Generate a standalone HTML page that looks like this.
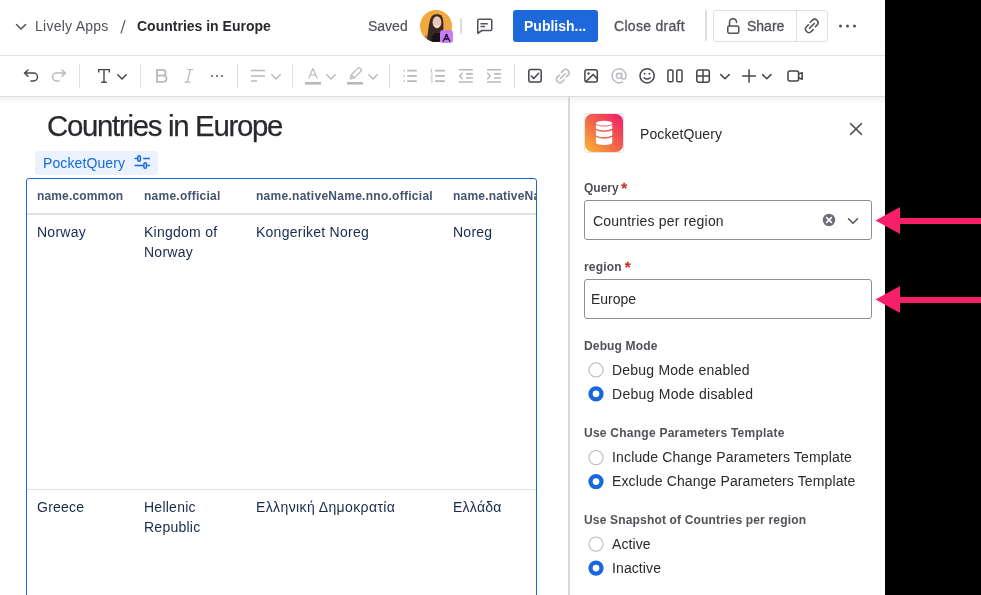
<!DOCTYPE html>
<html><head><meta charset="utf-8">
<style>
*{box-sizing:border-box;margin:0;padding:0}
html,body{width:981px;height:595px;overflow:hidden;background:#000}
body{position:relative;font-family:"Liberation Sans",sans-serif;color:#292A2E}
.abs{position:absolute;white-space:nowrap}
#app{will-change:transform;position:absolute;left:0;top:0;width:885px;height:595px;background:#fff;overflow:hidden}
.t14{font-size:14px;line-height:16px}
.t12{font-size:12px;line-height:14px}
.sub{color:#505258}
svg{position:absolute;overflow:visible}
.sep{position:absolute;width:2px;background:#DDDEE1;border-radius:1px}
.tsep{position:absolute;width:1px;background:#DDDEE1;top:64px;height:24px}
.radio{position:absolute;width:16px;height:16px;border-radius:50%;border:1px solid #B7B9BE;background:#fff}
.radio.on{border:4.5px solid #1868DB;background:#fff}
.lbl{font-weight:700;color:#505258}
.req{color:#C9372C;-webkit-text-stroke:0.3px #C9372C;letter-spacing:0;font-size:15px;line-height:14px;vertical-align:top;margin-left:-0.7px}
</style></head><body>
<div id="app">
  <!-- ============ HEADER ============ -->
  <svg style="left:0;top:0" width="40" height="56"><path d="M16.5 24.5 L21 29 L25.5 24.5" fill="none" stroke="#505258" stroke-width="1.5" stroke-linecap="round" stroke-linejoin="round"/></svg>
  <div class="abs t14 sub" style="left:35px;top:18px;letter-spacing:0.25px">Lively Apps</div>
  <svg style="left:0;top:0" width="140" height="40"><path d="M124.9 20.6 L121.1 32.9" stroke="#505258" stroke-width="1.2" stroke-linecap="round"/></svg>
  <div class="abs t14" style="left:137px;top:18px;font-weight:700;color:#292A2E">Countries in Europe</div>

  <div class="abs t14 sub" style="left:368px;top:18px;-webkit-text-stroke:0.2px #505258">Saved</div>
  <!-- avatar -->
  <svg style="left:420px;top:10px" width="32" height="32" viewBox="0 0 32 32">
    <defs><clipPath id="avc"><circle cx="16" cy="16" r="16"/></clipPath></defs>
    <g clip-path="url(#avc)">
      <rect width="32" height="32" fill="#F0A93C"/>
      <path d="M3 32 Q4 26 8 24.5 L12 26 L11 32 Z" fill="#8A7B73"/>
      <path d="M7 32 C8 22 9 9 12 6 C14 3.8 19.5 3.6 21.5 5.8 C23.5 8.5 23.8 14 23.2 22 L22 32 Z" fill="#3B2722"/>
      <ellipse cx="17" cy="12.3" rx="4.4" ry="6.1" fill="#EBC6B6"/>
      <path d="M14.9 15.5 Q17 17.3 19.1 15.5" fill="none" stroke="#fff" stroke-width="0.9"/>
      <path d="M11 32 Q12 24.5 15 23 L21 23 Q24 25 25 32 Z" fill="#171314"/>
    </g>
  </svg>
  <div class="abs" style="left:440px;top:30px;width:13px;height:13px;background:#C97CF4;border-radius:3px"></div>
  <svg style="left:440px;top:30px" width="13" height="13"><path d="M3 11.5 L6.5 5 L10 11.5 M4.5 9 L8.5 9" fill="none" stroke="#1B1B2A" stroke-width="1.4" stroke-linejoin="round"/><circle cx="6.5" cy="5" r="1.2" fill="#1B1B2A"/></svg>
  <div class="sep" style="left:460px;top:18px;height:16px"></div>
  <!-- comment icon -->
  <svg style="left:475px;top:17px" width="20" height="20"><path d="M2.75 3.5 Q2.75 2.25 4 2.25 L15.5 2.25 Q16.75 2.25 16.75 3.5 L16.75 12.25 Q16.75 13.5 15.5 13.5 L7 13.5 L2.75 16.25 Z" fill="none" stroke="#505258" stroke-width="1.5" stroke-linejoin="round"/><path d="M5.5 6.75 H12.75 M5.5 9.5 H10" stroke="#505258" stroke-width="1.5"/></svg>
  <div class="abs" style="left:513px;top:10px;width:85px;height:32px;background:#1D68DB;border-radius:3px"></div>
  <div class="abs t14" style="left:524px;top:18px;font-weight:700;color:#fff">Publish...</div>
  <div class="abs t14 sub" style="left:614px;top:18px;letter-spacing:0.3px;-webkit-text-stroke:0.3px #505258">Close draft</div>
  <div class="sep" style="left:705px;top:10px;height:31px"></div>
  <div class="abs" style="left:713px;top:10px;width:115px;height:32px;border:1px solid #DDDEE1;border-radius:3px"></div>
  <div class="abs" style="left:796px;top:10px;width:1px;height:32px;background:#DDDEE1"></div>
  <svg style="left:726px;top:17px" width="16" height="18"><path d="M3.5 8.5 V5.5 Q3.5 1.75 7 1.75 Q10.5 1.75 10.5 5.5" fill="none" stroke="#505258" stroke-width="1.5" stroke-linecap="round"/><rect x="1.75" y="9" width="11" height="7.25" rx="1.5" fill="none" stroke="#505258" stroke-width="1.5"/></svg>
  <div class="abs t14 sub" style="left:747px;top:18px;-webkit-text-stroke:0.3px #505258">Share</div>
  <svg style="left:0;top:0" width="885" height="56"><path d="M810.3 22.2 L812.2 20.3 Q814.6 17.9 817 20.3 Q819.4 22.7 817 25.1 L815.3 26.8 M808.4 24.8 L806.5 26.7 Q804.1 29.1 806.5 31.5 Q808.9 33.9 811.3 31.5 L813.2 29.6 M809.5 28.3 L814.3 23.5" fill="none" stroke="#505258" stroke-width="1.6" stroke-linecap="round"/></svg>
  <svg style="left:838px;top:24px" width="20" height="4"><circle cx="2.5" cy="2" r="1.5" fill="#505258"/><circle cx="9.5" cy="2" r="1.5" fill="#505258"/><circle cx="16.5" cy="2" r="1.5" fill="#505258"/></svg>

  <div class="abs" style="left:0;top:55px;width:885px;height:1px;background:#E4E5E7"></div>

  <!-- ============ TOOLBAR ============ -->
  <svg style="left:0;top:0" width="885" height="96">
  <g fill="none" stroke-width="1.5" stroke-linecap="round" stroke-linejoin="round">
    <!-- undo / redo -->
    <path d="M28 70 L24.5 73 L28 76.3 M24.5 73 H33.5 A4 4 0 0 1 33.5 81 H31" stroke="#44464C"/>
    <path d="M62 70 L65.5 73 L62 76.3 M65.5 73 H56.5 A4 4 0 0 0 56.5 81 H59" stroke="#B7B9BE"/>
    <!-- chevrons -->
    <path d="M117.8 74.8 L122 79 L126.2 74.8" stroke="#44464C"/>
    <path d="M271.8 74.8 L276 79 L280.2 74.8" stroke="#B7B9BE"/>
    <path d="M326.8 74.8 L331 79 L335.2 74.8" stroke="#B7B9BE"/>
    <path d="M368.8 74.8 L373 79 L377.2 74.8" stroke="#B7B9BE"/>
    <path d="M720.8 74.6 L725 78.8 L729.2 74.6" stroke="#44464C"/>
    <path d="M762.6 74.6 L766.8 78.8 L771 74.6" stroke="#44464C"/>
  </g>
  <!-- separators -->
  <g fill="#DDDEE1">
    <rect x="79" y="64" width="1" height="24"/>
    <rect x="140" y="64" width="1" height="24"/>
    <rect x="237" y="64" width="1" height="24"/>
    <rect x="292" y="64" width="1" height="24"/>
    <rect x="389" y="64" width="1" height="24"/>
    <rect x="514" y="64" width="1" height="24"/>
  </g>
  <!-- T -->
  <g fill="none" stroke="#44464C" stroke-width="1.4">
    <path d="M98.7 72.6 V69.6 H109.3 V72.6"/>
    <path d="M104 69.6 V82.2 M101.2 82.2 H106.8"/>
  </g>
  <!-- B -->
  <path d="M157 69.9 H162.2 Q165.7 69.9 165.7 72.9 Q165.7 75.6 162.2 75.6 H157 Z M157 75.6 H162.9 Q166.6 75.6 166.6 78.6 Q166.6 81.9 162.9 81.9 H157 Z" fill="none" stroke="#B7B9BE" stroke-width="1.8" stroke-linejoin="round"/>
  <!-- I -->
  <path d="M187.3 69.5 H193.3 M184.5 82.2 H190.5 M190.6 69.5 L187.2 82.2" fill="none" stroke="#B7B9BE" stroke-width="1.2"/>
  <!-- dots -->
  <g fill="#44464C"><circle cx="212" cy="76" r="0.9"/><circle cx="217" cy="76" r="0.9"/><circle cx="222" cy="76" r="0.9"/></g>
  <!-- align -->
  <path d="M251 70.6 H265 M251 75.9 H265 M251 81 H257" stroke="#B7B9BE" stroke-width="1.5" fill="none"/>
  <!-- A -->
  <path d="M308.6 78.6 L312.9 68.6 L317.3 78.6 M310.2 75 H315.6" fill="none" stroke="#B7B9BE" stroke-width="1.2" stroke-linejoin="round"/>
  <rect x="305" y="82" width="16" height="2.6" fill="#B7B9BE"/>
  <!-- highlighter -->
  <path d="M358.3 67.9 Q358.9 67.3 359.5 67.9 L361.3 69.7 Q361.9 70.3 361.3 70.9 L354.4 77.9 L351.3 74.8 Z M351.3 74.8 L350.4 78.8 L354.4 77.9" fill="none" stroke="#B7B9BE" stroke-width="1.3" stroke-linejoin="round"/>
  <rect x="347" y="82" width="16" height="2.6" fill="#B7B9BE"/>
  <!-- bullet list -->
  <g fill="#B7B9BE"><circle cx="404.2" cy="70.6" r="0.9"/><circle cx="404.2" cy="75.9" r="0.9"/><circle cx="404.2" cy="81.1" r="0.9"/></g>
  <path d="M407.2 70.6 H416.8 M407.2 75.9 H416.8 M407.2 81.1 H416.8" stroke="#B7B9BE" stroke-width="1.6"/>
  <!-- numbered list -->
  <path d="M435.1 70.6 H444.9 M435.1 75.9 H444.9 M435.1 81.1 H444.9" stroke="#B7B9BE" stroke-width="1.6"/>
  <path d="M431.5 69 V72 M430.8 69.6 L431.5 69 M430.6 72.2 H432.6 M430.6 74.6 Q431.6 73.6 432.4 74.4 Q432.8 75.2 430.6 77.3 H432.6 M430.6 79.2 H432.5 L431.4 80.6 Q432.8 80.8 432.5 82 Q431.9 82.9 430.6 82.4" fill="none" stroke="#B7B9BE" stroke-width="0.8"/>
  <!-- outdent / indent -->
  <path d="M459 69.7 H472.8 M466.1 73.9 H472.8 M466.1 78 H472.8 M459 82 H472.8" stroke="#B7B9BE" stroke-width="1.6"/>
  <path d="M462.2 73.3 L459.6 76 L462.2 78.7" fill="none" stroke="#B7B9BE" stroke-width="1.5" stroke-linecap="round" stroke-linejoin="round"/>
  <path d="M487 69.7 H500.9 M494 73.9 H500.9 M494 78 H500.9 M487 82 H500.9" stroke="#B7B9BE" stroke-width="1.6"/>
  <path d="M487.6 73.3 L490.3 76 L487.6 78.7" fill="none" stroke="#B7B9BE" stroke-width="1.5" stroke-linecap="round" stroke-linejoin="round"/>
  <!-- checkbox -->
  <rect x="528.8" y="69.6" width="12.4" height="12.4" rx="2" fill="none" stroke="#44464C" stroke-width="1.5"/>
  <path d="M531.3 76 L533.8 78.6 L538.6 73.3" fill="none" stroke="#44464C" stroke-width="1.5" stroke-linecap="round" stroke-linejoin="round"/>
  <!-- link gray -->
  <path transform="translate(-249 50.2)" d="M810.3 22.2 L812.2 20.3 Q814.6 17.9 817 20.3 Q819.4 22.7 817 25.1 L815.3 26.8 M808.4 24.8 L806.5 26.7 Q804.1 29.1 806.5 31.5 Q808.9 33.9 811.3 31.5 L813.2 29.6 M809.5 28.3 L814.3 23.5" fill="none" stroke="#B7B9BE" stroke-width="1.5" stroke-linecap="round"/>
  <!-- image -->
  <rect x="584.9" y="69.7" width="12.4" height="12.4" rx="2" fill="none" stroke="#44464C" stroke-width="1.5"/>
  <circle cx="588.5" cy="73.5" r="1.2" fill="#44464C"/>
  <path d="M585.5 82 L593.3 74.4 L597.2 79" fill="none" stroke="#44464C" stroke-width="1.5" stroke-linejoin="round"/>
  <!-- @ -->
  <circle cx="619" cy="75.8" r="2.6" fill="none" stroke="#B7B9BE" stroke-width="1.4"/>
  <path d="M621.6 73.2 V77 Q621.6 79 623.5 79 Q626 79 626 75.8 A7 7 0 1 0 622.5 81.8" fill="none" stroke="#B7B9BE" stroke-width="1.4" stroke-linecap="round"/>
  <!-- smiley -->
  <circle cx="647.1" cy="75.8" r="7.1" fill="none" stroke="#44464C" stroke-width="1.5"/>
  <circle cx="644.7" cy="73.8" r="0.95" fill="#44464C"/><circle cx="649.5" cy="73.8" r="0.95" fill="#44464C"/>
  <path d="M644 77.7 Q647.1 80.3 650.2 77.7" fill="none" stroke="#44464C" stroke-width="1.5" stroke-linecap="round"/>
  <!-- columns -->
  <rect x="667.9" y="69.9" width="5" height="11.9" rx="1.3" fill="none" stroke="#44464C" stroke-width="1.5"/>
  <rect x="676.8" y="69.9" width="5.2" height="11.9" rx="1.3" fill="none" stroke="#44464C" stroke-width="1.5"/>
  <!-- table -->
  <rect x="696.8" y="69.9" width="12.5" height="12.3" rx="2" fill="none" stroke="#44464C" stroke-width="1.5"/>
  <path d="M703.05 69.9 V82.2 M696.8 76.05 H709.3" stroke="#44464C" stroke-width="1.5"/>
  <!-- plus -->
  <path d="M749.05 69.2 V82.8 M742.2 76 H755.9" stroke="#44464C" stroke-width="1.5"/>
  <!-- video -->
  <rect x="788" y="70.9" width="10.6" height="10" rx="2" fill="none" stroke="#44464C" stroke-width="1.5"/>
  <path d="M798.6 74 L802.2 72.6 V79.2 L798.6 77.8" fill="none" stroke="#44464C" stroke-width="1.5" stroke-linejoin="round"/>
</svg>

  <div class="abs" style="left:0;top:96px;width:885px;height:1px;background:#DCDDDF"></div>
  <div class="abs" style="left:0;top:97px;width:885px;height:8px;background:linear-gradient(#F2F2F3,#fff)"></div>

  <!-- ============ CONTENT ============ -->
  <div class="abs" style="left:47px;top:110px;font-size:29.4px;line-height:32px;letter-spacing:-1.3px;color:#292A2E;-webkit-text-stroke:0.25px #292A2E">Countries in Europe</div>
  <div class="abs" style="left:35px;top:151px;width:123px;height:24px;background:#E9F2FE;border-radius:3px"></div>
  <div class="abs t14" style="left:43px;top:155px;color:#1868DB;letter-spacing:0.1px">PocketQuery</div>
  <svg style="left:0;top:0" width="200" height="200"><g fill="none" stroke="#1868DB" stroke-width="1.5">
    <path d="M134.6 158.5 H137.2 M143.2 158.5 H149.9 M134.6 165.5 H143 M147.4 165.5 H149.9"/>
    <rect x="137.8" y="155.7" width="2.6" height="5.6" rx="1.3"/>
    <rect x="143.9" y="162.7" width="2.6" height="5.6" rx="1.3"/>
  </g></svg>

  <!-- table -->
  <div class="abs" style="left:26px;top:178px;width:511px;height:430px;border:1px solid #1868DB;border-radius:3px;overflow:hidden">
    <div class="abs" style="left:0;top:34px;width:520px;height:2px;background:#DFE1E6"></div>
    <div class="abs" style="left:0;top:310px;width:520px;height:1px;background:#DFE1E6"></div>
    <div class="abs t12" style="left:10px;top:10px;font-weight:700;color:#44546F;letter-spacing:0.15px">name.common</div>
    <div class="abs t12" style="left:117px;top:10px;font-weight:700;color:#44546F;letter-spacing:0.25px">name.official</div>
    <div class="abs t12" style="left:229px;top:10px;font-weight:700;color:#44546F;letter-spacing:0.27px">name.nativeName.nno.official</div>
    <div class="abs t12" style="left:426px;top:10px;font-weight:700;color:#44546F;letter-spacing:0.2px">name.nativeName.nno.common</div>

    <div class="abs" style="left:10px;top:43px;font-size:14px;line-height:20px;color:#172B4D;letter-spacing:0.25px">Norway</div>
    <div class="abs" style="left:117px;top:43px;font-size:14px;line-height:20px;color:#172B4D;letter-spacing:0.25px;white-space:normal;width:92px">Kingdom of Norway</div>
    <div class="abs" style="left:229px;top:43px;font-size:14px;line-height:20px;color:#172B4D;letter-spacing:0.25px">Kongeriket Noreg</div>
    <div class="abs" style="left:426px;top:43px;font-size:14px;line-height:20px;color:#172B4D;letter-spacing:0.25px">Noreg</div>

    <div class="abs" style="left:10px;top:318px;font-size:14px;line-height:20px;color:#172B4D;letter-spacing:0.25px">Greece</div>
    <div class="abs" style="left:117px;top:318px;font-size:14px;line-height:20px;color:#172B4D;letter-spacing:0.25px;white-space:normal;width:92px">Hellenic Republic</div>
    <div class="abs" style="left:229px;top:318px;font-size:14px;line-height:20px;color:#172B4D;letter-spacing:0.39px">Ελληνική Δημοκρατία</div>
    <div class="abs" style="left:426px;top:318px;font-size:14px;line-height:20px;color:#172B4D;letter-spacing:0.25px">Ελλάδα</div>
  </div>

  <!-- ============ PANEL ============ -->
  <div class="abs" style="left:568px;top:97px;width:2px;height:498px;background:#D8D8D8"></div>
  <!-- logo -->
  <div class="abs" style="left:584px;top:113px;width:40px;height:40px;border:1px solid #E4E5E7;border-radius:3px;background:#fff"></div>
  <div class="abs" style="left:585px;top:114px;width:38px;height:38px;border-radius:7px;background:linear-gradient(45deg,#FDB833 0%,#F0634A 50%,#F31A6C 100%)"></div>
  <svg style="left:0;top:0" width="885" height="595">
    <g fill="#fff">
      <ellipse cx="604.1" cy="123.2" rx="8.2" ry="2.4"/>
      <path d="M595.9 125 Q604.1 128.2 612.3 125 V128.8 Q604.1 132 595.9 128.8 Z"/>
      <path d="M595.9 130.3 Q604.1 133.5 612.3 130.3 V135.4 Q604.1 138.6 595.9 135.4 Z"/>
      <path d="M595.9 137.1 Q604.1 140.3 612.3 137.1 V142.6 Q612.3 145 604.1 145 Q595.9 145 595.9 142.6 Z"/>
    </g>
    <path d="M850.6 123.6 L861.4 134.4 M861.4 123.6 L850.6 134.4" stroke="#505258" stroke-width="1.5" stroke-linecap="round"/>
    <circle cx="829" cy="220" r="6.2" fill="#6B6E76"/>
    <path d="M826.6 217.6 L831.4 222.4 M831.4 217.6 L826.6 222.4" stroke="#fff" stroke-width="1.5" stroke-linecap="round"/>
    <path d="M848.5 218.7 L853 223.2 L857.5 218.7" fill="none" stroke="#505258" stroke-width="1.5" stroke-linecap="round" stroke-linejoin="round"/>
  </svg>
  <div class="abs t14" style="left:640px;top:126px;color:#292A2E;letter-spacing:0.1px">PocketQuery</div>

  <div class="abs t12 lbl" style="left:584px;top:181px">Query <span class="req">*</span></div>
  <div class="abs" style="left:584px;top:200px;width:288px;height:40px;border:1px solid #8C8F97;border-radius:3px"></div>
  <div class="abs t14" style="left:593px;top:213px;color:#292A2E;letter-spacing:0.2px">Countries per region</div>

  <div class="abs t12 lbl" style="left:584px;top:260px;letter-spacing:0.2px">region <span class="req">*</span></div>
  <div class="abs" style="left:584px;top:279px;width:288px;height:40px;border:1px solid #8C8F97;border-radius:3px"></div>
  <div class="abs t14" style="left:591px;top:291px;color:#292A2E">Europe</div>

  <div class="abs t12 lbl" style="left:584px;top:339px;letter-spacing:0.15px">Debug Mode</div>
  <div class="abs t14" style="left:612px;top:362px;color:#292A2E;letter-spacing:0.22px">Debug Mode enabled</div>
  <div class="abs t14" style="left:612px;top:386px;color:#292A2E;letter-spacing:0.27px">Debug Mode disabled</div>

  <div class="abs t12 lbl" style="left:584px;top:426px;letter-spacing:0.25px">Use Change Parameters Template</div>
  <div class="abs t14" style="left:612px;top:449px;color:#292A2E;letter-spacing:0.15px">Include Change Parameters Template</div>
  <div class="abs t14" style="left:612px;top:473px;color:#292A2E;letter-spacing:0.12px">Exclude Change Parameters Template</div>

  <div class="abs t12 lbl" style="left:584px;top:513px;letter-spacing:0.17px">Use Snapshot of Countries per region</div>
  <div class="abs t14" style="left:612px;top:536px;color:#292A2E;letter-spacing:0.1px">Active</div>
  <div class="abs t14" style="left:612px;top:560px;color:#292A2E;letter-spacing:0.1px">Inactive</div>

  <svg style="left:0;top:0" width="885" height="595">
    <g fill="#fff" stroke="#B7B9BE" stroke-width="1.1">
      <circle cx="596" cy="369.9" r="7.1"/>
      <circle cx="596" cy="457.6" r="7.1"/>
      <circle cx="596" cy="544.1" r="7.1"/>
    </g>
    <g fill="#fff" stroke="#1868DB" stroke-width="4.3">
      <circle cx="596" cy="393.8" r="5.5"/>
      <circle cx="596" cy="481.6" r="5.5"/>
      <circle cx="596" cy="568.1" r="5.5"/>
    </g>
  </svg>
</div>

<!-- arrows -->
<svg style="left:0;top:0" width="981" height="595">
  <path d="M875.5 220.5 L900 207 L900 218 L981 218 L981 224 L900 224 L900 234 Z" fill="#F61F6A"/>
  <path d="M875.5 299.5 L900 286 L900 297 L981 297 L981 303 L900 303 L900 313 Z" fill="#F61F6A"/>
</svg>
</body></html>
